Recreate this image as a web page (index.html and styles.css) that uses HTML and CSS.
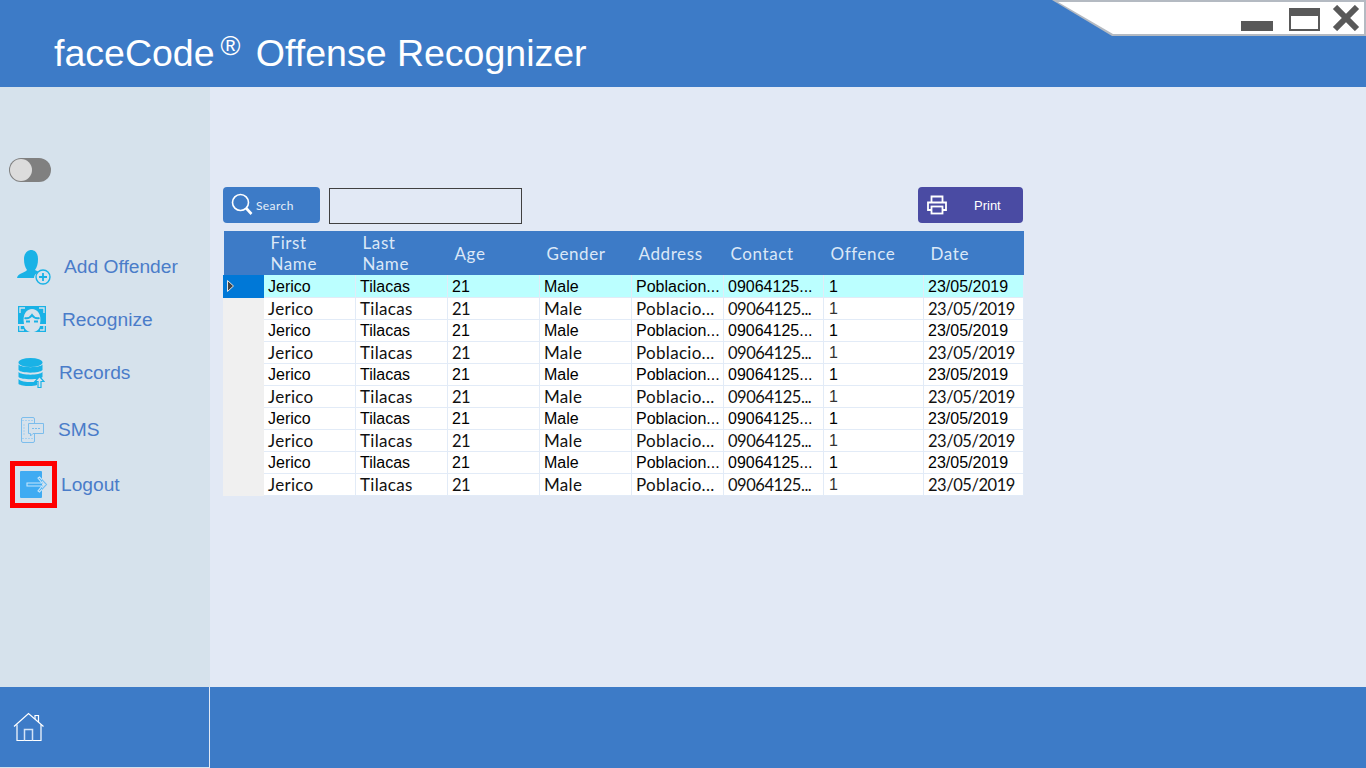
FILE: index.html
```html
<!DOCTYPE html>
<html lang="en">
<head>
<meta charset="utf-8">
<title>faceCode Offense Recognizer</title>
<link rel="stylesheet" href="styles.css">
</head>
<body>
<div class="app">
  <header class="header">
    <h1 class="title">faceCode<sup class="reg">®</sup> Offense Recognizer</h1>
    <div class="window-tab">
      <svg class="tab-shape" width="316" height="37" viewBox="0 0 316 37">
        <polygon points="2,0 316,0 316,36 62,36" fill="#b4bac2"/>
        <polygon points="8,2 314,2 314,34 63,34" fill="#ffffff"/>
      </svg>
      <div class="win-btns">
        <span class="win-min"></span>
        <span class="win-max"></span>
        <svg class="win-close" width="28" height="26" viewBox="0 0 28 26">
          <path d="M3 2 L25 24 M25 2 L3 24" stroke="#595959" stroke-width="6"/>
        </svg>
      </div>
    </div>
  </header>

  <div class="middle">
    <aside class="sidebar">
      <div class="toggle"><span class="knob"></span></div>
      <nav class="nav">
        <a class="item item-add">
          <svg class="ico" width="36" height="36" viewBox="0 0 36 36">
            <path d="M1 29 C2 24 9 24 11 21 C9 18 8 15 8 10 C8 4 12 1 15 1 C19 1 22 4 22 10 C22 15 21 18 19 21 L23 23 C20 24 18 26 18 29 Z" fill="#19b2e6"/>
            <circle cx="27" cy="28" r="7" fill="#d6e2ec" stroke="#19b2e6" stroke-width="1.4"/>
            <path d="M27 24 V32 M23 28 H31" stroke="#19b2e6" stroke-width="1.8"/>
          </svg>
          <span class="label">Add Offender</span>
        </a>
        <a class="item item-rec">
          <svg class="ico" width="28" height="26" viewBox="0 0 28 26">
            <rect x="0" y="0" width="28" height="18" fill="#19b2e6"/>
            <path d="M6 18 C4 8 9 3 14 3 C19 3 24 8 22 18 Z" fill="#d6e2ec"/>
            <path d="M6.500 12 C10 13 12 12 14 9 C16 12 18 13 21.500 12" fill="none" stroke="#19b2e6" stroke-width="2"/>
            <path d="M8 15.500 H12 M16 15.500 H20" stroke="#19b2e6" stroke-width="2"/>
            <path d="M2 7 V2 H7 M21 2 H26 V7" fill="none" stroke="#d6e2ec" stroke-width="1.400"/>
            <rect x="0" y="20" width="28" height="6" fill="#19b2e6"/>
            <path d="M6 20 H22 C21 24 18 26 14 26 C10 26 7 24 6 20 Z" fill="#d6e2ec"/>
            <path d="M2 20 V24 H6 M26 20 V24 H22" fill="none" stroke="#d6e2ec" stroke-width="1.400"/>
          </svg>
          <span class="label">Recognize</span>
        </a>
        <a class="item item-records">
          <svg class="ico" width="27" height="30" viewBox="0 0 27 30">
            <ellipse cx="12.500" cy="4.500" rx="12" ry="4.500" fill="#19b2e6"/>
            <path d="M0.500 6.500 C3 10 22 10 24.500 6.500 V12 C22 15.500 3 15.500 0.500 12 Z" fill="#19b2e6"/>
            <path d="M0.500 14 C3 17.500 22 17.500 24.500 14 V19 C22 22 3 22 0.500 19 Z" fill="#19b2e6"/>
            <path d="M0.500 21 C3 24.500 16 24.500 19 23.500 V27 C14 29 3 28 0.500 26 Z" fill="#19b2e6"/>
            <path d="M20 29.500 V23.500 H17 L21.500 18.500 L26 23.500 H23 V29.500 Z" fill="#d6e2ec" stroke="#19b2e6" stroke-width="1.200"/>
          </svg>
          <span class="label">Records</span>
        </a>
        <a class="item item-sms">
          <svg class="ico" width="24" height="26" viewBox="0 0 24 26">
            <rect x="1.500" y="0.500" width="13" height="25" rx="1.500" fill="none" stroke="#7cbdec"/>
            <path d="M2 3.500 H14 M2 21.500 H14 M4 7 V18" stroke="#a6d0f0" stroke-dasharray="2 1"/>
            <path d="M8.500 6.500 H23.500 V16.500 H13 L10.500 19 V16.500 H8.500 Z" fill="#d6e2ec" stroke="#7cbdec"/>
            <path d="M12 11.500 H14 M15 11.500 H17 M18 11.500 H20" stroke="#7cbdec"/>
          </svg>
          <span class="label">SMS</span>
        </a>
        <a class="item item-logout">
          <span class="red-box">
            <svg width="27" height="27" viewBox="0 0 27 27">
              <defs>
                <linearGradient id="logout-arrow" gradientUnits="userSpaceOnUse" x1="0" y1="0" x2="27" y2="0">
                  <stop offset="0.81" stop-color="#c4e6fc"/>
                  <stop offset="0.82" stop-color="#6dbdf4"/>
                </linearGradient>
              </defs>
              <rect x="0" y="0" width="22" height="27" rx="1" fill="#3fabf2"/>
              <path d="M7 12 H22 L18 7 L19.500 6 L26.500 13.500 L19.500 21 L18 20 L22 15 H7 Z" fill="none" stroke="url(#logout-arrow)" stroke-width="1.100"/>
            </svg>
          </span>
          <span class="label">Logout</span>
        </a>
      </nav>
    </aside>

    <main class="content">
      <div class="toolbar">
        <button class="btn btn-search">
          <svg width="22" height="24" viewBox="0 0 22 24">
            <circle cx="9.500" cy="9.500" r="8" fill="none" stroke="#ffffff" stroke-width="1.600"/>
            <path d="M15 15 L20.500 21" stroke="#ffffff" stroke-width="2.600"/>
          </svg>
          <span>Search</span>
        </button>
        <div class="search-box"></div>
        <button class="btn btn-print">
          <svg width="20" height="20" viewBox="0 0 20 20">
            <path d="M4.500 7 V1.500 H15.500 V7 M4.500 15 H1 V7.500 H19 V15 H15.500" fill="none" stroke="#ffffff" stroke-width="1.800"/>
            <rect x="4.500" y="11.500" width="11" height="7" fill="none" stroke="#ffffff" stroke-width="1.800"/>
          </svg>
          <span>Print</span>
        </button>
      </div>

      <table class="grid">
        <colgroup>
          <col class="c-head"><col class="c-std"><col class="c-std"><col class="c-std"><col class="c-std"><col class="c-std"><col class="c-wide"><col class="c-wide"><col class="c-wide">
        </colgroup>
        <thead>
          <tr>
            <th></th><th>First<br>Name</th><th>Last<br>Name</th><th>Age</th><th>Gender</th><th>Address</th><th>Contact</th><th>Offence</th><th>Date</th>
          </tr>
        </thead>
        <tbody>
          <tr class="row-a row-cur"><td class="rh"><svg class="arrow" width="9" height="14" viewBox="0 0 9 14"><path d="M1.500 1.500 L7.500 7 L1.500 12.500 Z" fill="#444444" stroke="#e4e4e4"/></svg></td><td>Jerico</td><td>Tilacas</td><td>21</td><td>Male</td><td>Poblacion...</td><td>09064125...</td><td class="one">1</td><td>23/05/2019</td></tr>
          <tr class="row-b"><td class="rh"></td><td>Jerico</td><td>Tilacas</td><td class="num">21</td><td>Male</td><td>Poblacio...</td><td class="num">09064125...</td><td class="one">1</td><td class="num">23/05/2019</td></tr>
          <tr class="row-a"><td class="rh"></td><td>Jerico</td><td>Tilacas</td><td>21</td><td>Male</td><td>Poblacion...</td><td>09064125...</td><td class="one">1</td><td>23/05/2019</td></tr>
          <tr class="row-b"><td class="rh"></td><td>Jerico</td><td>Tilacas</td><td class="num">21</td><td>Male</td><td>Poblacio...</td><td class="num">09064125...</td><td class="one">1</td><td class="num">23/05/2019</td></tr>
          <tr class="row-a"><td class="rh"></td><td>Jerico</td><td>Tilacas</td><td>21</td><td>Male</td><td>Poblacion...</td><td>09064125...</td><td class="one">1</td><td>23/05/2019</td></tr>
          <tr class="row-b"><td class="rh"></td><td>Jerico</td><td>Tilacas</td><td class="num">21</td><td>Male</td><td>Poblacio...</td><td class="num">09064125...</td><td class="one">1</td><td class="num">23/05/2019</td></tr>
          <tr class="row-a"><td class="rh"></td><td>Jerico</td><td>Tilacas</td><td>21</td><td>Male</td><td>Poblacion...</td><td>09064125...</td><td class="one">1</td><td>23/05/2019</td></tr>
          <tr class="row-b"><td class="rh"></td><td>Jerico</td><td>Tilacas</td><td class="num">21</td><td>Male</td><td>Poblacio...</td><td class="num">09064125...</td><td class="one">1</td><td class="num">23/05/2019</td></tr>
          <tr class="row-a"><td class="rh"></td><td>Jerico</td><td>Tilacas</td><td>21</td><td>Male</td><td>Poblacion...</td><td>09064125...</td><td class="one">1</td><td>23/05/2019</td></tr>
          <tr class="row-b"><td class="rh"></td><td>Jerico</td><td>Tilacas</td><td class="num">21</td><td>Male</td><td>Poblacio...</td><td class="num">09064125...</td><td class="one">1</td><td class="num">23/05/2019</td></tr>
        </tbody>
      </table>
    </main>
  </div>

  <footer class="footer">
    <div class="footer-left">
      <svg width="32" height="30" viewBox="0 0 32 30">
        <path d="M1 14.500 L15.500 1.500 L30.500 14.500" fill="none" stroke="#ffffff" stroke-width="1.200"/>
        <path d="M22 7 V3.500 H25.500 V10" fill="none" stroke="#ffffff" stroke-width="1.200"/>
        <path d="M4 12.500 V28.500 H28 V12.500" fill="none" stroke="#ffffff" stroke-width="1.200"/>
        <path d="M11.500 28.500 V17.500 H19.500 V28.500" fill="none" stroke="#d3e3f7" stroke-width="1.500"/>
      </svg>
    </div>
  </footer>
</div>
</body>
</html>
```

FILE: styles.css
```css
* { box-sizing: border-box; }
html, body { margin: 0; padding: 0; }
body { font-family: "Liberation Sans", Arial, sans-serif; overflow: hidden; }

.app { width: 1366px; height: 768px; display: flex; flex-direction: column; background: #e2e9f5; }

/* header */
.header { position: relative; height: 87px; flex: none; background: #3d7bc7; padding: 29px 0 0 54px; }
.title { margin: 0; font-size: 37.5px; line-height: 48px; font-weight: 400; color: #ffffff; white-space: nowrap; }
.reg { font-size: 27px; line-height: 0; margin: 0 5px 0 6px; vertical-align: 11px; }

.window-tab { position: absolute; top: 0; right: 0; width: 316px; height: 37px; }
.tab-shape { display: block; }
.win-btns { position: absolute; top: 5px; right: 6px; display: flex; align-items: flex-end; gap: 16px; height: 26px; }
.win-min { width: 32px; height: 10px; background: #595959; }
.win-max { width: 31px; height: 23px; border: 2px solid #595959; border-top-width: 8px; background: #fff; }
.win-close { display: block; margin-left: -4px; margin-right: 0; }

/* middle */
.middle { flex: 1; display: flex; min-height: 0; }
.sidebar { width: 210px; flex: none; background: #d6e2ec; padding-top: 71px; }

.toggle { width: 42px; height: 24px; margin-left: 9px; border-radius: 12px; background: #808080; padding: 1px; }
.knob { display: block; width: 22px; height: 22px; border-radius: 50%; background: #dcdcdc; }

.nav { margin-top: 67px; display: flex; flex-direction: column; }
.item { display: flex; align-items: center; font-size: 19.2px; color: #4a7cc9; }
.label { display: block; white-space: nowrap; }
.ico { display: block; flex: none; }

.item-add { height: 36px; padding-left: 16px; gap: 12px; }
.item-rec { height: 26px; margin-top: 21px; padding-left: 18px; gap: 16px; }
.item-rec .label { margin-top: 2px; }
.item-records { height: 30px; margin-top: 26px; padding-left: 18px; gap: 14px; }
.item-sms { height: 26px; margin-top: 29px; padding-left: 20px; gap: 14px; }
.item-logout { height: 47px; margin-top: 18px; padding-left: 10px; gap: 4px; }
.red-box { display: block; width: 47px; height: 47px; border: 5px solid #fe0000; padding: 5px 0 0 5px; flex: none; }
.red-box svg { display: block; overflow: visible; }

/* content */
.content { flex: 1; padding: 100px 0 0 13px; }
.toolbar { display: flex; align-items: flex-start; width: 800px; height: 44px; }
.btn { display: flex; align-items: center; height: 36px; border: 0; border-radius: 4px; color: #fff; font-family: inherit; padding: 0; }
.btn-search { width: 97px; background: #3d7bc7; padding-left: 8px; gap: 3px; font-family: Lato, sans-serif; font-size: 12px; letter-spacing: 0.4px; color: #e6eef8; }
.btn-print { width: 105px; margin-left: auto; background: #4a4ba3; padding-left: 9px; font-size: 13px; }
.btn-print span { margin-left: 27px; }
.btn svg { display: block; flex: none; }
.search-box { width: 193px; height: 36px; margin: 1px 0 0 9px; border: 1px solid #404040; }

/* grid */
.grid { width: 800px; border-collapse: collapse; table-layout: fixed; }
.c-head { width: 40px; }
.c-std { width: 92px; }
.c-wide { width: 100px; }
.grid thead tr { height: 44px; background: #3d7bc7; }
.grid th { padding: 0 0 0 7px; font-family: Lato, sans-serif; font-size: 17px; line-height: 21px; font-weight: 400; letter-spacing: 0.6px; color: #dbe8f7; text-align: left; vertical-align: middle; }
.grid tbody tr { height: 22px; background: #ffffff; }
.grid td { padding: 2px 0 0 4px; height: 22px; line-height: 18px; color: #000; white-space: nowrap; overflow: hidden; border: 1px solid #e2ebf7; border-width: 0 1px 1px 1px; }
.row-a td { font-family: "Liberation Sans", Arial, sans-serif; font-size: 16px; }
.row-b td { font-family: Lato, sans-serif; font-size: 17px; font-weight: 400; letter-spacing: 0.3px; padding-top: 2px; color: #111; }
.row-b td.num { font-size: 16.5px; letter-spacing: -0.45px; }
.grid td.one { padding-left: 5px; }
.row-b td.one { font-family: "Liberation Sans", Arial, sans-serif; font-size: 16px; letter-spacing: 0; color: #333; }
.grid td.rh { background: #f0f0f0; border-color: #f0f0f0; padding: 0 0 0 2px; }
.row-cur td { background: #bbffff; }
.grid .row-cur td.rh { background: #0078d7; border-color: #0078d7; }
.arrow { display: block; }

/* footer */
.footer { height: 81px; flex: none; background: #3d7bc7; }
.footer-left { width: 210px; height: 81px; border-right: 1px solid #e2e9f5; border-bottom: 1px solid #d6e2ec; padding: 25px 0 0 13px; }
.footer-left svg { display: block; }
```
